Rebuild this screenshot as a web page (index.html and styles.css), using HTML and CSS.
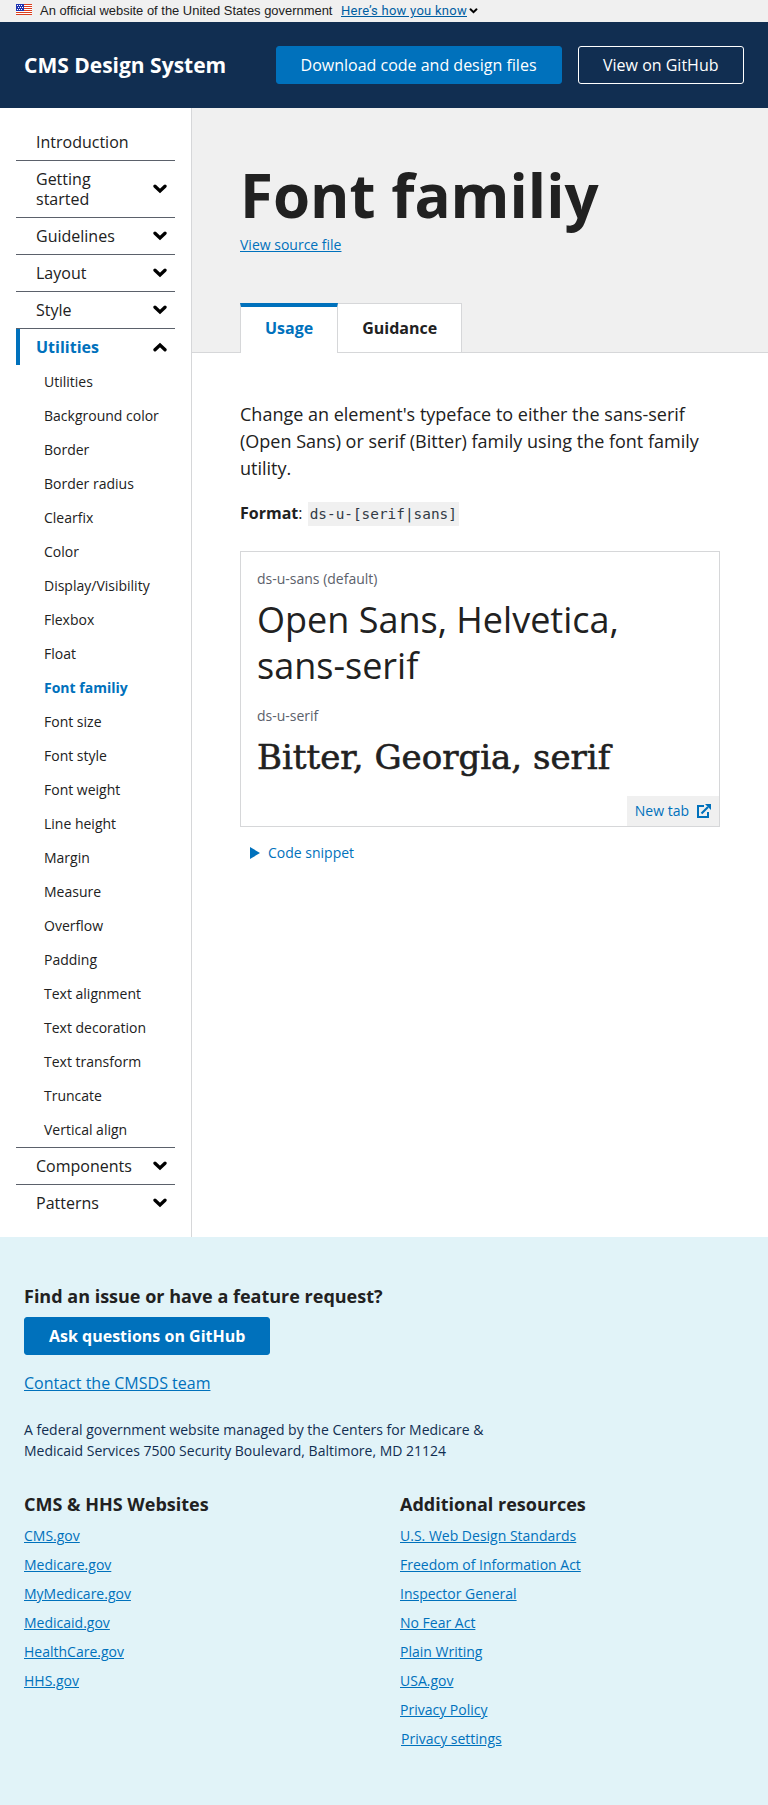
FILE: index.html
```html
<!DOCTYPE html>
<html lang="en">
<head>
<meta charset="utf-8">
<title>Font familiy - CMS Design System</title>
<link rel="stylesheet" href="styles.css">
</head>
<body>
<svg class="sprite" aria-hidden="true">
  <symbol id="chevron" viewBox="0 0 14 10"><path d="M2 2.200 7 7l5-4.800" fill="none" stroke="#000" stroke-width="3.300" stroke-linecap="round" stroke-linejoin="miter"/></symbol>
</svg>
<div class="banner">
  <svg class="flag" viewBox="0 0 16 11" shape-rendering="crispEdges">
    <path fill="#fff" d="M0 0h16v11H0z"/>
    <path fill="#db3e1f" d="M8 0h8v1H8zM8 2h8v1H8zM8 4h8v1H8zM0 8h16v1H0zM0 10h16v1H0zM8 6h8v1H8z"/>
    <path fill="#1e33b1" d="M0 0h8v7H0z"/>
    <path fill="#fff" d="M1 1h1v1H1zM3 1h1v1H3zM5 1h1v1H5zM2 3h1v1H2zM4 3h1v1H4zM6 3h1v1H6zM1 5h1v1H1zM3 5h1v1H3zM5 5h1v1H5z"/>
  </svg>
  <span class="banner-text">An official website of the United States government</span>
  <a class="banner-link" href="#">Here’s how you know</a>
  <svg class="banner-chevron"><use href="#chevron"/></svg>
</div>
<header class="header">
  <span class="brand">CMS Design System</span>
  <a class="button" href="#">Download code and design files</a>
  <a class="button button-outline" href="#">View on GitHub</a>
</header>
<div class="page">
  <nav class="nav">
    <a class="nav-item">Introduction</a>
    <a class="nav-item"><span>Getting started</span><svg><use href="#chevron"/></svg></a>
    <a class="nav-item"><span>Guidelines</span><svg><use href="#chevron"/></svg></a>
    <a class="nav-item"><span>Layout</span><svg><use href="#chevron"/></svg></a>
    <a class="nav-item"><span>Style</span><svg><use href="#chevron"/></svg></a>
    <a class="nav-item current"><span>Utilities</span><svg class="up"><use href="#chevron"/></svg></a>
    <ul class="subnav">
      <li>Utilities</li>
      <li>Background color</li>
      <li>Border</li>
      <li>Border radius</li>
      <li>Clearfix</li>
      <li>Color</li>
      <li>Display/Visibility</li>
      <li>Flexbox</li>
      <li>Float</li>
      <li class="selected">Font familiy</li>
      <li>Font size</li>
      <li>Font style</li>
      <li>Font weight</li>
      <li>Line height</li>
      <li>Margin</li>
      <li>Measure</li>
      <li>Overflow</li>
      <li>Padding</li>
      <li>Text alignment</li>
      <li>Text decoration</li>
      <li>Text transform</li>
      <li>Truncate</li>
      <li>Vertical align</li>
    </ul>
    <a class="nav-item"><span>Components</span><svg><use href="#chevron"/></svg></a>
    <a class="nav-item"><span>Patterns</span><svg><use href="#chevron"/></svg></a>
  </nav>
  <main class="main">
    <div class="hero">
      <h1>Font familiy</h1>
      <a class="source" href="#">View source file</a>
      <div class="tabs">
        <span class="tab tab-active">Usage</span>
        <span class="tab">Guidance</span>
      </div>
    </div>
    <div class="content">
      <p class="lead">Change an element's typeface to either the sans-serif (Open Sans) or serif (Bitter) family using the font family utility.</p>
      <p class="format"><b>Format</b>: <code>ds-u-[serif|sans]</code></p>
      <div class="example">
        <p class="label">ds-u-sans (default)</p>
        <p class="sample">Open Sans, Helvetica, sans-serif</p>
        <p class="label">ds-u-serif</p>
        <p class="sample sample-serif">Bitter, Georgia, serif</p>
        <a class="new-tab">New tab
          <svg viewBox="0 0 14 14"><path d="M7 2H1v11h10V8" fill="none" stroke="#0071bc" stroke-width="2"/><path d="M4.500 9.500 11 3" stroke="#0071bc" stroke-width="2.200"/><path d="M8 0h6v6z" fill="#0071bc"/></svg>
        </a>
      </div>
      <a class="snippet"><svg viewBox="0 0 10 12"><path d="M0 0l10 6-10 6z" fill="#0071bc"/></svg>Code snippet</a>
    </div>
  </main>
</div>
<footer class="footer">
  <h2>Find an issue or have a feature request?</h2>
  <a class="button button-bold" href="#">Ask questions on GitHub</a>
  <a class="contact" href="#">Contact the CMSDS team</a>
  <p class="address">A federal government website managed by the Centers for Medicare &amp; Medicaid Services 7500 Security Boulevard, Baltimore, MD 21124</p>
  <div class="columns">
    <section>
      <h2>CMS &amp; HHS Websites</h2>
      <ul>
        <li><a href="#">CMS.gov</a></li>
        <li><a href="#">Medicare.gov</a></li>
        <li><a href="#">MyMedicare.gov</a></li>
        <li><a href="#">Medicaid.gov</a></li>
        <li><a href="#">HealthCare.gov</a></li>
        <li><a href="#">HHS.gov</a></li>
      </ul>
    </section>
    <section>
      <h2>Additional resources</h2>
      <ul>
        <li><a href="#">U.S. Web Design Standards</a></li>
        <li><a href="#">Freedom of Information Act</a></li>
        <li><a href="#">Inspector General</a></li>
        <li><a href="#">No Fear Act</a></li>
        <li><a href="#">Plain Writing</a></li>
        <li><a href="#">USA.gov</a></li>
        <li><a href="#">Privacy Policy</a></li>
        <li class="settings"><a href="#">Privacy settings</a></li>
      </ul>
    </section>
  </div>
</footer>
</body>
</html>
```
FILE: styles.css
```css
* { box-sizing: border-box; }
body, h1, h2, p, ul { margin: 0; padding: 0; }
ul { list-style: none; }
body {
  font-family: "Open Sans", Helvetica, sans-serif;
  font-size: 16px;
  line-height: 24px;
  color: #212121;
  background: #fff;
}
a { color: #0071bc; }
svg { flex: none; display: block; }
.sprite { position: absolute; width: 0; height: 0; }

.banner {
  display: flex;
  height: 22px;
  padding-left: 16px;
  background: #f0f0f0;
  font: 12px/22px "Liberation Sans", sans-serif;
}
.flag { width: 16px; height: 11px; margin: 4px 8px 0 0; }
.banner-text { width: 293px; margin-right: 8px; font-size: 12.950px; white-space: nowrap; }
.banner-link { width: 126px; font-family: Roboto, sans-serif; font-size: 13px; letter-spacing: 0.260px; color: #005ea2; white-space: nowrap; }
.banner-chevron { width: 9px; height: 6px; margin: 8px 0 0 2px; }

.header {
  display: flex;
  align-items: center;
  gap: 16px;
  height: 86px;
  padding: 0 24px;
  background: #112e51;
}
.brand { margin-right: auto; color: #fff; font-size: 21px; font-weight: 700; }
.button {
  display: inline-block;
  height: 38px;
  padding: 0 24px;
  border: 1px solid #0071bc;
  border-radius: 3px;
  background: #0071bc;
  color: #fff;
  line-height: 36px;
  text-decoration: none;
  white-space: nowrap;
}
.button-outline { padding: 0 24.500px; border-color: #fff; background: transparent; }
.button-bold { font-weight: 700; }

.page { display: flex; height: 1129px; }
.nav { flex: none; width: 192px; padding: 16px 16px 0; border-right: 1px solid #d6d7d9; }
.nav-item {
  display: flex;
  align-items: center;
  justify-content: space-between;
  padding: 8px 8px 8px 20px;
  border-bottom: 1px solid #5b616b;
  color: #212121;
  line-height: 20px;
}
.nav-item:last-child { border-bottom: 0; }
.nav-item svg { width: 14px; height: 10px; }
.nav-item span { max-width: 90px; }
.nav-item .up { transform: rotate(180deg); }
.nav-item.current { padding-left: 16px; border-left: 4px solid #0071bc; border-bottom: 0; color: #0071bc; font-weight: 700; }
.subnav { border-bottom: 1px solid #5b616b; font-size: 14px; line-height: 18px; }
.subnav li { padding: 8px 0 8px 28px; white-space: nowrap; }
.subnav .selected { color: #0071bc; font-weight: 700; }

.main { flex: 1; }
.hero {
  display: flex;
  flex-direction: column;
  align-items: flex-start;
  height: 245px;
  padding: 48px 48px 0;
  border-bottom: 1px solid #d6d7d9;
  background: #f0f0f0;
}
h1 { font-size: 60px; line-height: 78px; font-weight: 700; }
.source { font-size: 14px; line-height: 21px; }
.tabs { display: flex; height: 50px; margin: auto 0 -1px; }
.tab {
  padding: 12px 24px 0;
  border: 1px solid #d6d7d9;
  border-left: 0;
  background: #fff;
  font-weight: 700;
}
.tab-active { padding-top: 9px; border-top: 4px solid #0071bc; border-left: 1px solid #d6d7d9; border-bottom: 0; color: #0071bc; }

.content { padding: 48px; }
.lead { font-size: 18px; line-height: 27px; }
.format { height: 24px; margin-top: 19px; }
.format code { margin-left: 1px; padding: 4px 2px; background: #f0f0f0; color: #323a45; font: 14.400px/20px "DejaVu Sans Mono", monospace; }
.example {
  position: relative;
  height: 276px;
  margin-top: 26px;
  padding: 16px;
  border: 1px solid #d6d7d9;
}
.label { color: #5b616b; font-size: 14px; line-height: 21px; }
.sample { margin: 8px 0 16px; font-size: 36px; line-height: 46px; }
.sample-serif { font-family: "DejaVu Serif", serif; font-size: 34px; -webkit-text-stroke: 0.600px #212121; }
.new-tab {
  position: absolute;
  right: 0;
  bottom: 0;
  display: flex;
  align-items: center;
  gap: 8px;
  height: 30px;
  padding: 0 8px;
  background: #f0f0f0;
  font-size: 14px;
}
.new-tab svg { width: 14px; height: 14px; }
.snippet { display: flex; align-items: center; gap: 8px; margin-top: 14px; padding-left: 10px; font-size: 14px; }
.snippet svg { width: 10px; height: 12px; }

.footer {
  display: flex;
  flex-direction: column;
  align-items: flex-start;
  height: 568px;
  padding: 46px 24px 0;
  background: #e1f3f8;
}
h2 { font-size: 18px; line-height: 27px; font-weight: 700; }
.footer .button { margin-top: 7px; }
.contact { margin-top: 16px; }
.address { width: 480px; margin-top: 24px; color: #112e51; font-size: 14px; line-height: 21px; }
.columns { display: grid; grid-template-columns: 1fr 1fr; width: 100%; column-gap: 32px; margin-top: 30px; }
.columns ul { margin-top: 7px; font-size: 14px; line-height: 21px; }
.columns li { height: 29px; }
.settings { padding-left: 1px; }
```
